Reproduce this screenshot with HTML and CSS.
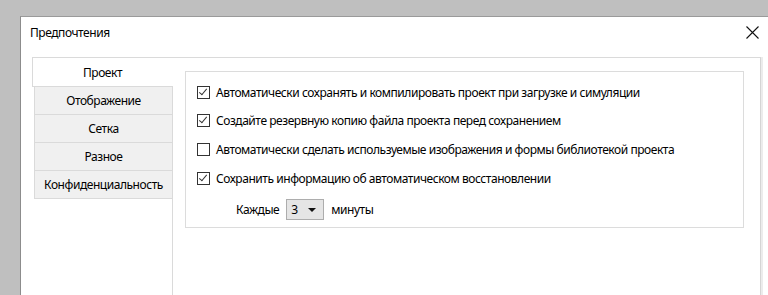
FILE: index.html
```html
<!DOCTYPE html>
<html>
<head>
  <title>Предпочтения</title>
  <link rel="stylesheet" href="styles.css">
</head>
<body>
  <div class="dialog">
    <div class="dialog-header">
      <span class="dialog-title">Предпочтения</span>
      <svg class="close" width="13" height="13" viewBox="0 0 13 13">
        <path d="M0.5 0.5 L12.5 12.5 M12.5 0.5 L0.5 12.5" stroke="#111" stroke-width="1.1" fill="none"/>
      </svg>
    </div>

    <div class="tabs">
      <div class="tab-list">
        <div class="tab active">Проект</div>
        <div class="tab">Отображение</div>
        <div class="tab">Сетка</div>
        <div class="tab">Разное</div>
        <div class="tab">Конфиденциальность</div>
        <div class="tab-filler"></div>
      </div>

      <div class="tab-page">
        <div class="group">
          <label class="option">
            <span class="checkbox checked"></span>
            Автоматически сохранять и компилировать проект при загрузке и симуляции
          </label>
          <label class="option">
            <span class="checkbox checked"></span>
            Создайте резервную копию файла проекта перед сохранением
          </label>
          <label class="option">
            <span class="checkbox"></span>
            Автоматически сделать используемые изображения и формы библиотекой проекта
          </label>
          <label class="option">
            <span class="checkbox checked"></span>
            Сохранить информацию об автоматическом восстановлении
          </label>
          <div class="interval">
            <span>Каждые</span>
            <div class="combo">
              <span class="combo-value">3</span>
              <span class="combo-arrow"></span>
            </div>
            <span>минуты</span>
          </div>
        </div>
      </div>
    </div>
  </div>
</body>
</html>
```

FILE: styles.css
```css
html, body {
  margin: 0;
  height: 100%;
  overflow: hidden;
}
body {
  background: #bfbfbf;
  font-family: "Noto Sans", "Open Sans", sans-serif;
  font-size: 12px;
  letter-spacing: -0.45px;
  color: #000;
}
.dialog {
  margin: 16px 0 0 20px;
  height: calc(100% - 16px);
  background: #fff;
  border-left: 1px solid #8c8c8c;
  border-top: 1px solid #9a9a9a;
  display: flex;
  flex-direction: column;
}
.dialog-header {
  height: 30px;
  display: flex;
  align-items: center;
  justify-content: space-between;
  padding: 0 9px 10px 9px;
  flex-shrink: 0;
}
.close {
  margin-right: 0;
}

/* tab control */
.tabs {
  display: flex;
  flex: 1;
  margin-left: 11px;
  width: 728px;
  border-top: 1px solid #dadada;
  border-right: 1px solid #d5d5d5;
  box-shadow: 2px 0 0 #ececec;
}
.tab-list {
  width: 141px;
  display: flex;
  flex-direction: column;
  flex-shrink: 0;
}
.tab {
  height: 27px;
  margin-left: 2px;
  background: #f0f0f0;
  border: 1px solid #dadada;
  border-top: none;
  display: flex;
  align-items: center;
  justify-content: center;
}
.tab.active {
  height: 28px;
  margin-left: 0;
  background: #fff;
  border: none;
  border-left: 1px solid #dadada;
  border-bottom: 1px solid #dadada;
  padding-right: 1px;
}
.tab-filler {
  flex: 1;
  border-right: 1px solid #dadada;
}
.tab-page {
  flex: 1;
  padding: 13px 0 0 12px;
}
.group {
  width: 559px;
  height: 157px;
  border: 1px solid #dcdcdc;
  padding-top: 6px;
  box-sizing: border-box;
}
.option {
  display: flex;
  align-items: center;
  height: 28.6px;
  padding-left: 11px;
  gap: 6px;
}
.checkbox {
  width: 11px;
  height: 11px;
  border: 1px solid #333;
  position: relative;
  flex-shrink: 0;
}
.checkbox.checked::after {
  content: "";
  position: absolute;
  left: 3px;
  top: 0px;
  width: 3px;
  height: 7px;
  border-right: 1px solid #333;
  border-bottom: 1px solid #333;
  transform: rotate(40deg);
}
.interval {
  display: flex;
  align-items: center;
  gap: 7px;
  padding-left: 50px;
  margin-top: 7px;
}
.combo {
  width: 38px;
  height: 21px;
  background: #e5e5e5;
  border: 1px solid #adadad;
  display: flex;
  align-items: center;
  justify-content: space-between;
  padding: 0 7px 0 4px;
  box-sizing: border-box;
}
.combo-arrow {
  width: 0;
  height: 0;
  border-left: 4px solid transparent;
  border-right: 4px solid transparent;
  border-top: 4px solid #111;
}
```
